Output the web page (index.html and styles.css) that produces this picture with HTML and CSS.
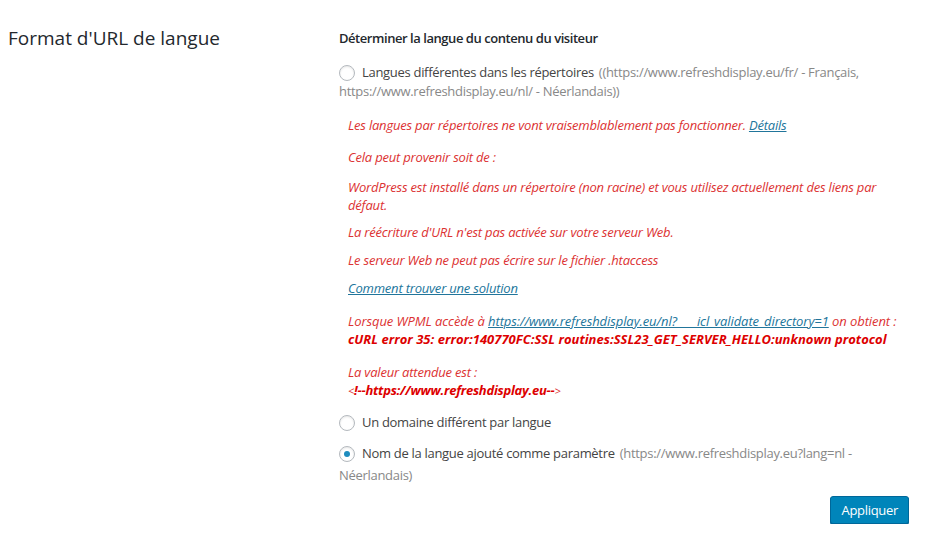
FILE: index.html
```html
<!DOCTYPE html>
<html lang="fr">
<head>
<meta charset="utf-8">
<link rel="stylesheet" href="styles.css">
</head>
<body>
<div class="row">
  <div class="th"><h2 class="title">Format d'URL de langue</h2></div>
  <div class="td">
    <h4 class="heading">Déterminer la langue du contenu du visiteur</h4>
    <div class="opt opt1">
      <span class="radio"></span><span class="lbl">Langues différentes dans les répertoires</span><span class="muted">((https://www.refreshdisplay.eu/fr/ - Français, https://www.refreshdisplay.eu/nl/ - Néerlandais))</span>
    </div>
    <div class="errors">
      <p class="e e1">Les langues par répertoires ne vont vraisemblablement pas fonctionner. <a href="#">Détails</a></p>
      <p class="e e2">Cela peut provenir soit de :</p>
      <p class="e e3">WordPress est installé dans un répertoire (non racine) et vous utilisez actuellement des liens par défaut.</p>
      <p class="e e4">La réécriture d'URL n'est pas activée sur votre serveur Web.</p>
      <p class="e e5">Le serveur Web ne peut pas écrire sur le fichier .htaccess</p>
      <p class="e e6"><a href="#">Comment trouver une solution</a></p>
      <p class="e e7">Lorsque WPML accède à <a href="#">https://www.refreshdisplay.eu/nl?&nbsp;&nbsp;&nbsp;&nbsp;&nbsp;&nbsp;icl_validate_directory=1</a> on obtient :<br><strong>cURL error 35: error:140770FC:SSL routines:SSL23_GET_SERVER_HELLO:unknown protocol</strong></p>
      <p class="e e8">La valeur attendue est :<br><span class="sm">&lt;</span><strong>!--https://www.refreshdisplay.eu--</strong><span class="sm">&gt;</span></p>
    </div>
    <div class="opt opt2"><span class="radio"></span><span class="lbl">Un domaine différent par langue</span></div>
    <div class="opt opt3"><span class="radio checked"></span><span class="lbl">Nom de la langue ajouté comme paramètre</span><span class="muted">(https://www.refreshdisplay.eu?lang=nl - Néerlandais)</span></div>
    <div class="actions"><button class="btn">Appliquer</button></div>
  </div>
</div>
</body>
</html>
```
FILE: styles.css
```css
html, body { background: #fff; }
body {
  margin: 0;
  font-family: "Open Sans", "Noto Sans", sans-serif;
  font-size: 13px;
  color: #444;
}
.row { display: flex; }
.th { width: 339px; flex: none; }
.title {
  margin: 26px 0 0 8px;
  font-size: 19px;
  font-weight: 400;
  color: #23282d;
  line-height: 24px;
}
.td { width: 570px; }
.heading {
  margin: 29px 0 0 0;
  font-size: 13px;
  font-weight: 600;
  color: #23282d;
  line-height: 18px;
  letter-spacing: -0.45px;
}
.opt { line-height: 19px; letter-spacing: -0.3px; color: #444; }
.opt1 { margin-top: 16px; }
.opt2 { margin-top: 13px; }
.opt3 { margin-top: 10px; line-height: 22px; }
.muted { color: #888; margin-left: 5px; }
.radio {
  display: inline-block;
  box-sizing: border-box;
  width: 16px; height: 16px;
  border: 1px solid #b4b9be;
  border-radius: 50%;
  vertical-align: -4px;
  margin: 0 7px 0 0;
  box-shadow: inset 0 1px 2px rgba(0,0,0,.1);
  position: relative;
  background: #fff;
}
.radio.checked::after {
  content: "";
  position: absolute;
  left: 4px; top: 4px;
  width: 6px; height: 6px;
  border-radius: 50%;
  background: #1e8cbe;
}
.errors { padding-left: 9px; color: #dc3232; font-style: italic; letter-spacing: -0.2px; }
.e { margin: 0; line-height: 18px; }
.e1 { margin-top: 15px; }
.e2 { margin-top: 14px; }
.e3 { margin-top: 12px; }
.e4 { margin-top: 9px; }
.e5 { margin-top: 10px; }
.e6 { margin-top: 10px; }
.e7 { margin-top: 15px; letter-spacing: -0.08px; }
.e8 { margin-top: 15px; }
.e a { color: #21759b; }
.e strong { color: #d00; font-weight: 700; letter-spacing: 0.02px; }
.e8 strong { letter-spacing: -0.25px; }
.sm { font-size: 11px; }
.actions { display: flex; justify-content: flex-end; margin-top: 10px; }
.btn {
  font-family: inherit;
  font-size: 13px;
  height: 28px;
  padding: 0 10px;
  background: #0085ba;
  border: 1px solid #006799;
  border-radius: 3px;
  color: #fff;
  box-shadow: 0 1px 0 #006799;
  letter-spacing: -0.3px;
}
```
